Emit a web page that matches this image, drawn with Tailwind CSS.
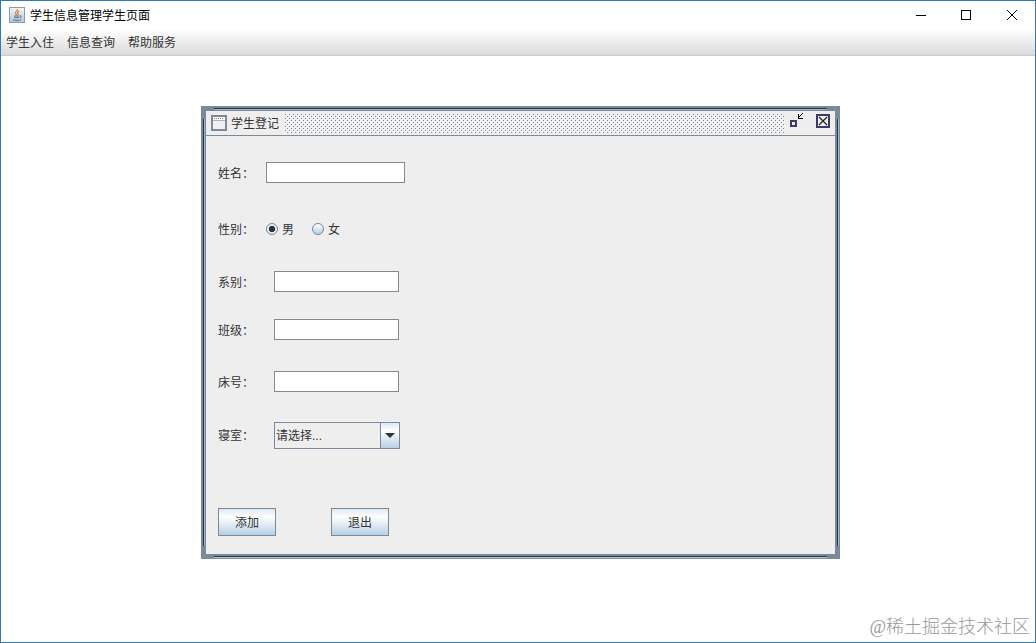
<!DOCTYPE html>
<html lang="zh-CN">
<head>
    <meta charset="UTF-8">
    <meta name="viewport" content="width=device-width, initial-scale=1.0">
    <title>学生信息管理学生页面</title>
    <script src="https://cdn.jsdelivr.net/npm/@tailwindcss/browser@4"></script>
</head>
<body class="font-['Liberation_Sans','Noto_Sans_CJK_SC',sans-serif] text-xs text-[#333]">
    <div class="relative min-h-screen flex flex-col border border-[#2f7cb5] bg-white">
        <!-- Title bar -->
        <header class="flex items-center h-7 pl-2 text-black">
            <svg class="w-4 h-4 mr-[5px]" viewBox="0 0 16 16" fill="none">
                <defs>
                    <linearGradient id="cup" x1="0" y1="0" x2="0" y2="1">
                        <stop offset="0" stop-color="#f4f7fa"/>
                        <stop offset="1" stop-color="#b4c5d6"/>
                    </linearGradient>
                </defs>
                <rect x="0.5" y="0.5" width="15" height="15" fill="url(#cup)" stroke="#8d9aa8"/>
                <path d="M8.500 2c.6 2-2.800 2.600-2 4.300.3.700 1 1 1.200 1.700M10.500 4.200c-1.800.6-2.300 1.400-1.600 2.300.4.600.2 1-.3 1.500" stroke="#e8762c" stroke-width="1.200"/>
                <path d="M5 9h5.500M5.300 10.700h5M4 12.800c2 .8 6.500.8 8 0M10.800 9c2-.6 2 1.400.2 1.900" stroke="#54718f"/>
            </svg>
            <h1 class="pt-[2px]">学生信息管理学生页面</h1>
            <div class="flex ml-auto">
                <button class="w-[46px] h-7 grid place-items-center" aria-label="最小化">
                    <svg width="12" height="12" stroke="#000" shape-rendering="crispEdges"><path d="M2 6.500h10"/></svg>
                </button>
                <button class="w-[46px] h-7 grid place-items-center" aria-label="最大化">
                    <svg width="12" height="12" fill="none" stroke="#000" shape-rendering="crispEdges"><rect x="1.500" y="1.500" width="9" height="9"/></svg>
                </button>
                <button class="w-[46px] h-7 grid place-items-center" aria-label="关闭">
                    <svg width="12" height="12" stroke="#000"><path d="M1 1l10 10M11 1L1 11"/></svg>
                </button>
            </div>
        </header>

        <!-- Menu bar -->
        <nav class="flex items-center gap-[13px] h-[27px] px-[5px] pt-[2px] border-b border-[#ccc] bg-linear-to-b from-white to-[#dadada]">
            <button>学生入住</button>
            <button>信息查询</button>
            <button>帮助服务</button>
        </nav>

        <!-- Desktop -->
        <main class="relative flex-1">
            <section class="absolute left-[200px] top-[50px] w-[639px] border-5 border-[#7a8a99] bg-[#eee]">
                <i class="absolute h-[2px] -top-[3px] left-2 right-2 border-b border-[#a3b3c4] bg-[#26344f]"></i>
                <i class="absolute h-[2px] -bottom-1 left-2 right-2 border-b border-[#b8c6d6] bg-[#26344f]"></i>
                <i class="absolute w-[2px] -left-[3px] top-2 bottom-2 border-r border-[#a3b3c4] bg-[#26344f]"></i>
                <i class="absolute w-[2px] -right-1 top-2 bottom-2 border-r border-[#a3b3c4] bg-[#26344f]"></i>

                <div class="flex items-center h-[25px] pl-[5px] pr-[5px] border-b border-[#7a8a99]">
                    <svg class="w-4 h-4" viewBox="0 0 16 16" fill="none" shape-rendering="crispEdges">
                        <rect x="1" y="1" width="14" height="14" fill="#f0f0f0" stroke="#7a8a99" stroke-width="2"/>
                        <path d="M2 3.500h12" stroke="#fff" stroke-width="3"/>
                        <path d="M3 3.500h10" stroke="#7a8a99" stroke-dasharray="1 1"/>
                        <path d="M2 5.500h12" stroke="#a9b4bf"/>
                    </svg>
                    <h2 class="ml-1 pt-[2px]">学生登记</h2>
                    <svg class="flex-1 h-[19px] ml-[6px]">
                        <defs>
                            <pattern id="bumps" width="4" height="4" patternUnits="userSpaceOnUse">
                                <path d="M0 0h1v1H0zM2 2h1v1H2z" fill="#7a8a99"/>
                                <path d="M1 1h1v1H1zM3 3h1v1H3z" fill="#fff"/>
                            </pattern>
                        </defs>
                        <rect width="100%" height="100%" fill="url(#bumps)"/>
                    </svg>
                    <button class="ml-1 pb-1" aria-label="还原">
                        <svg width="16" height="16" fill="none" shape-rendering="crispEdges">
                            <rect x="2" y="8" width="5" height="5" stroke="#3b3b68" stroke-width="2"/>
                            <path d="M13.500 0.500L9.500 4.500M9.500 1v4.500h4" stroke="#000"/>
                        </svg>
                    </button>
                    <button class="ml-[11px] pb-1" aria-label="关闭窗口">
                        <svg width="14" height="14" fill="none">
                            <rect x="1" y="1" width="12" height="12" stroke="#3b3b68" stroke-width="2"/>
                            <path d="M3 3l8 8M11 3l-8 8" stroke="#222" stroke-width="1.200"/>
                        </svg>
                    </button>
                </div>

                <form class="h-[418px] pl-3 pt-[26px]">
                    <div class="flex items-center h-[21px]">
                        <label for="name" class="w-12 pt-[2px]">姓名：</label>
                        <input id="name" type="text" class="w-[139px] h-[21px] px-1 border border-[#848a90] bg-white">
                    </div>
                    <div class="flex items-center h-[21px] mt-[35px]" role="radiogroup" aria-label="性别">
                        <span class="w-12 pt-[2px]">性别：</span>
                        <label class="flex items-center gap-1 w-[46px]">
                            <input type="radio" name="sex" checked class="appearance-none w-3 h-3 rounded-full border border-[#7a8a99] bg-linear-to-b from-white to-[#b8cfe5] checked:bg-radial checked:from-[#333] checked:from-40% checked:to-[#e3ecf5] checked:to-50%">
                            <span class="pt-[2px]">男</span>
                        </label>
                        <label class="flex items-center gap-1">
                            <input type="radio" name="sex" class="appearance-none w-3 h-3 rounded-full border border-[#7a8a99] bg-linear-to-b from-white to-[#b8cfe5]">
                            <span class="pt-[2px]">女</span>
                        </label>
                    </div>
                    <div class="flex items-center h-[21px] mt-8">
                        <label for="dept" class="w-14 pt-[2px]">系别：</label>
                        <input id="dept" type="text" class="w-[125px] h-[21px] px-1 border border-[#848a90] bg-white">
                    </div>
                    <div class="flex items-center h-[21px] mt-[27px]">
                        <label for="class" class="w-14 pt-[2px]">班级：</label>
                        <input id="class" type="text" class="w-[125px] h-[21px] px-1 border border-[#848a90] bg-white">
                    </div>
                    <div class="flex items-center h-[21px] mt-[31px]">
                        <label for="bed" class="w-14 pt-[2px]">床号：</label>
                        <input id="bed" type="text" class="w-[125px] h-[21px] px-1 border border-[#848a90] bg-white">
                    </div>
                    <div class="flex items-center h-[27px] mt-[30px]">
                        <label for="room" class="w-14">寝室：</label>
                        <div class="relative w-[126px] h-[27px]">
                            <select id="room" class="appearance-none w-full h-full pl-px pr-5 border border-[#7a8a99] bg-[#eee]">
                                <option>请选择...</option>
                            </select>
                            <span class="absolute right-px inset-y-px w-[19px] grid place-items-center border-l border-[#7a8a99] bg-linear-to-b from-[#dde8f3] via-white via-30% to-[#b8cfe5] pointer-events-none">
                                <svg width="10" height="5" fill="#333"><path d="M0 0h10L5 5z"/></svg>
                            </span>
                        </div>
                    </div>
                    <div class="flex gap-[55px] mt-[59px]">
                        <button type="button" class="w-[58px] h-7 pt-[2px] border border-[#7a8a99] bg-linear-to-b from-[#dde8f3] via-white via-30% to-[#b8cfe5]">添加</button>
                        <button type="button" class="w-[58px] h-7 pt-[2px] border border-[#7a8a99] bg-linear-to-b from-[#dde8f3] via-white via-30% to-[#b8cfe5]">退出</button>
                    </div>
                </form>
            </section>
        </main>

        <p class="absolute right-[5px] bottom-[3px] text-[18px] leading-6 font-light text-[#999] font-['Liberation_Serif','Noto_Sans_CJK_SC',serif]">@稀土掘金技术社区</p>
    </div>
</body>
</html>
